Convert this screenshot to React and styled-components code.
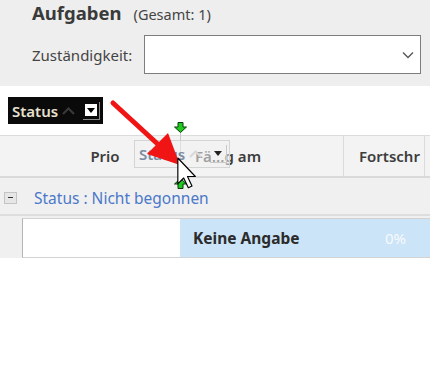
import styled, { createGlobalStyle } from 'styled-components';

const Global = createGlobalStyle`
  html, body {
    margin: 0;
    padding: 0;
    background: #ffffff;
  }
  body {
    font-family: 'Noto Sans', 'Open Sans', sans-serif;
    color: #333333;
  }
`;

const Page = styled.div`
  position: relative;
  width: 430px;
  height: 376px;
  overflow: hidden;
  background: #ffffff;
`;

const TopPanel = styled.section`
  background: #eeeeee;
  height: 86px;
  padding: 0 9px 0 32px;
  box-sizing: border-box;
  display: flex;
  flex-direction: column;
`;

const TitleRow = styled.div`
  display: flex;
  align-items: baseline;
  gap: 12px;
  height: 28px;
  line-height: 26px;
`;

const Title = styled.span`
  font-size: 18.5px;
  font-weight: 700;
  color: #3a3a3a;
`;

const Count = styled.span`
  font-size: 14.5px;
  color: #444444;
`;

const FilterRow = styled.div`
  display: flex;
  align-items: center;
  margin-top: 7px;
`;

const Label = styled.span`
  font-size: 15px;
  color: #444444;
  width: 112px;
`;

const Combo = styled.div`
  flex: 1;
  height: 39px;
  box-sizing: border-box;
  border: 1px solid #7d7d7d;
  background: #ffffff;
  display: flex;
  align-items: center;
  justify-content: flex-end;
  padding-right: 6px;
`;

const GroupArea = styled.div`
  height: 49px;
  padding: 11px 0 0 8px;
  box-sizing: border-box;
`;

const GroupChip = styled.div`
  display: inline-flex;
  align-items: center;
  width: 95px;
  height: 27px;
  box-sizing: border-box;
  background: #0a0a0a;
  padding: 0 3px 0 4px;
  gap: 4px;
`;

const ChipText = styled.span`
  font-size: 15px;
  font-weight: 600;
  color: ${p => p.$ghost ? '#7b8ba3' : '#e6e0d0'};
`;

const DropButton = styled.span`
  margin-left: auto;
  width: 17px;
  height: 18px;
  box-sizing: border-box;
  border-right: 1px solid ${p => p.$ghost ? '#c9c9c9' : '#8a8a8a'};
  border-bottom: 1px solid ${p => p.$ghost ? '#c9c9c9' : '#8a8a8a'};
  display: flex;
  align-items: center;
  justify-content: center;
`;

const DropFace = styled.span`
  width: 12px;
  height: 12px;
  background: ${p => p.$ghost ? '#f2f2f2' : '#ffffff'};
  display: flex;
  align-items: center;
  justify-content: center;
`;

const HeaderRow = styled.div`
  display: flex;
  height: 40px;
  background: #f3f3f3;
  border-top: 1px solid #dcdcdc;
  border-bottom: 2px solid #d9d9d9;
`;

const HeaderCell = styled.div`
  width: ${p => p.$w}px;
  box-sizing: border-box;
  display: flex;
  align-items: center;
  justify-content: ${p => p.$center ? 'center' : 'flex-start'};
  padding-left: ${p => p.$pad || 0}px;
  border-right: ${p => p.$divider ? '1px solid #dadada' : 'none'};
  font-size: 15px;
  font-weight: 600;
  color: #3d3d3d;
  white-space: nowrap;
  overflow: hidden;
`;

const GroupRow = styled.div`
  display: flex;
  align-items: center;
  height: 36px;
  background: #f0f0f0;
  border-bottom: 2px solid #dddddd;
  padding-left: 4px;
  gap: 17px;
`;

const Toggle = styled.span`
  width: 13px;
  height: 12px;
  margin-top: 3px;
  box-sizing: border-box;
  border: 1px solid #c4c4c4;
  background: #e6e6e6;
  display: flex;
  align-items: center;
  justify-content: center;
  &::after {
    content: '';
    width: 5px;
    height: 1px;
    background: #333333;
  }
`;

const GroupLabel = styled.span`
  font-size: 15.5px;
  color: #4b78c9;
  margin-top: 4px;
`;

const DataRow = styled.div`
  display: flex;
  height: 42px;
  background: #f0f0f0;
  padding-left: 22px;
  padding-top: 2px;
  box-sizing: border-box;
`;

const Cell = styled.div`
  width: ${p => p.$w}px;
  flex: ${p => p.$grow ? 1 : 'none'};
  box-sizing: border-box;
  display: flex;
  align-items: center;
  background: ${p => p.$selected ? '#cce4f7' : '#ffffff'};
  border-top: 1px solid #d2d2d2;
  border-bottom: 1px solid #d2d2d2;
  border-left: ${p => p.$selected ? 'none' : '1px solid #b5b5b5'};
  padding-left: 13px;
`;

const Strong = styled.span`
  font-size: 15.5px;
  font-weight: 700;
  color: #2b2b2b;
  width: 192px;
`;

const Percent = styled.span`
  font-size: 15px;
  color: #f6fafd;
`;

const Overlay = styled.svg`
  position: absolute;
  left: ${p => p.$x}px;
  top: ${p => p.$y}px;
  overflow: visible;
  pointer-events: none;
`;

const Ghost = styled.div`
  position: absolute;
  left: 134px;
  top: 140px;
  width: 96px;
  height: 28px;
  box-sizing: border-box;
  border: 1px solid #d4d4d4;
  background: rgba(240, 240, 240, 0.55);
  display: flex;
  align-items: center;
  padding: 0 2px 0 4px;
  gap: 4px;
`;

const InsertLine = styled.div`
  position: absolute;
  left: 180px;
  top: 133px;
  width: 1px;
  height: 45px;
  background: #c8c8c8;
`;

const Triangle = ({ color = '#000' }) => (
  <svg width="8" height="5" viewBox="0 0 8 5"><path d="M0 0 H8 L4 5 Z" fill={color} /></svg>
);

const Caret = ({ color }) => (
  <svg width="13" height="8" viewBox="0 0 13 8">
    <path d="M1 7 L6.5 1.5 L12 7" fill="none" stroke={color} strokeWidth="2" />
  </svg>
);

const GreenArrow = ({ x, y, up }) => (
  <Overlay $x={x} $y={y} width="13" height="11" viewBox="0 0 13 11">
    <path
      d="M4 0.5 H9 V5 H12.5 L6.5 10.5 L0.5 5 H4 Z"
      fill="#1ecb1e"
      stroke="#0a3a0a"
      strokeWidth="1"
      transform={up ? 'rotate(180 6.5 5.5)' : undefined}
    />
  </Overlay>
);

export default function App() {
  return (
    <Page>
      <Global />
      <TopPanel>
        <TitleRow>
          <Title>Aufgaben</Title>
          <Count>(Gesamt: 1)</Count>
        </TitleRow>
        <FilterRow>
          <Label>Zuständigkeit:</Label>
          <Combo>
            <svg width="12" height="8" viewBox="0 0 12 8">
              <path d="M1 1.5 L6 6.5 L11 1.5" fill="none" stroke="#555" strokeWidth="1.3" />
            </svg>
          </Combo>
        </FilterRow>
      </TopPanel>

      <GroupArea>
        <GroupChip>
          <ChipText>Status</ChipText>
          <Caret color="#3a3a3a" />
          <DropButton>
            <DropFace><Triangle /></DropFace>
          </DropButton>
        </GroupChip>
      </GroupArea>

      <HeaderRow>
        <HeaderCell $w={22} />
        <HeaderCell $w={158} $center $pad={8}>Prio</HeaderCell>
        <HeaderCell $w={164} $pad={15} $divider>Fällig am</HeaderCell>
        <HeaderCell $w={81} $pad={15} $divider>Fortschr</HeaderCell>
      </HeaderRow>

      <GroupRow>
        <Toggle />
        <GroupLabel>Status : Nicht begonnen</GroupLabel>
      </GroupRow>

      <DataRow>
        <Cell $w={158} />
        <Cell $selected $grow>
          <Strong>Keine Angabe</Strong>
          <Percent>0%</Percent>
        </Cell>
      </DataRow>

      <InsertLine />
      <Ghost>
        <ChipText $ghost>Status</ChipText>
        <Caret color="#d8d8d8" />
        <DropButton $ghost>
          <DropFace $ghost><Triangle color="#222" /></DropFace>
        </DropButton>
      </Ghost>

      <GreenArrow x={174} y={122} />
      <GreenArrow x={174} y={178} up />

      <Overlay $x={0} $y={0} width="430" height="376">
        <line x1="113" y1="103" x2="162" y2="148" stroke="#f01414" strokeWidth="5" strokeLinecap="round" />
        <path d="M180 165 L147 154 L168 133 Z" fill="#f01414" />
      </Overlay>

      <Overlay $x={177} $y={157} width="20" height="32" viewBox="0 0 12 19">
        <path
          d="M0.5 0.5 L0.5 16 L4 12.5 L6.8 18.3 L9 17.3 L6.3 11.6 L11 11.6 Z"
          fill="#ffffff"
          stroke="#000000"
          strokeWidth="0.7"
          strokeLinejoin="round"
        />
      </Overlay>
    </Page>
  );
}
